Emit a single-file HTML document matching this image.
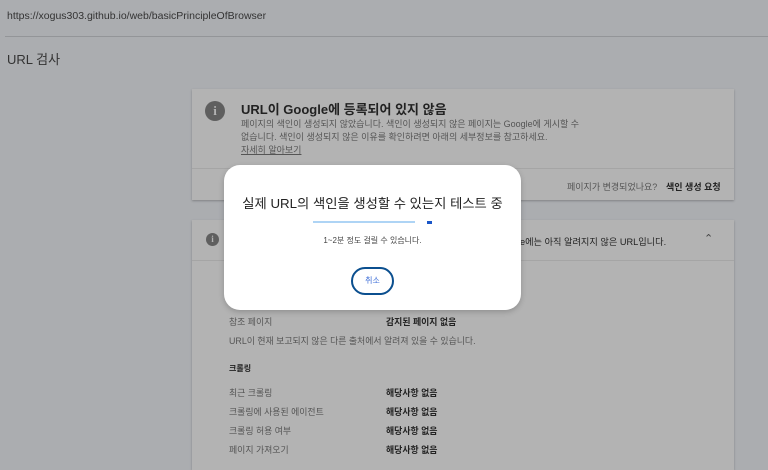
<!DOCTYPE html>
<html><head><meta charset="utf-8"><style>
*{margin:0;padding:0;box-sizing:border-box}
body{width:768px;height:463px;overflow:hidden;background:#abadb0;font-family:"Liberation Sans","Noto Sans CJK KR",sans-serif;position:relative;color:#333}
.a{position:absolute;white-space:nowrap}
.card{position:absolute;background:#b3b3b3;box-shadow:0 1px 2px rgba(0,0,0,.25)}
.ic{position:absolute;border-radius:50%;background:#5f5f5f;color:#b3b3b3;font-weight:bold;text-align:center;font-family:"Liberation Serif",serif}
.l{color:#555;font-size:8.9px}
.v{color:#222;font-size:8.9px;font-weight:bold}
</style></head><body>
<div class="a" style="left:7px;top:10px;font-size:10.5px;color:#333">https://xogus303.github.io/web/basicPrincipleOfBrowser</div>
<div class="a" style="left:5px;top:36px;width:763px;height:1px;background:#939598"></div>
<div class="a" style="left:7px;top:49px;font-size:13px;color:#333">URL 검사</div>

<div class="card" style="left:192px;top:89px;width:542px;height:111px">
 <div class="ic" style="left:13px;top:12px;width:20px;height:20px;font-size:13px;line-height:20px">i</div>
 <div class="a" style="left:49px;top:10px;font-size:13px;font-weight:bold;color:#222">URL이 Google에 등록되어 있지 않음</div>
 <div class="a" style="left:49px;top:29px;font-size:9px;color:#555;line-height:13px">페이지의 색인이 생성되지 않았습니다. 색인이 생성되지 않은 페이지는 Google에 게시할 수<br>없습니다. 색인이 생성되지 않은 이유를 확인하려면 아래의 세부정보를 참고하세요.<br><u>자세히 알아보기</u></div>
 <div class="a" style="left:0;top:79px;width:542px;height:1px;background:#a5a5a5"></div>
 <div class="a" style="left:375px;top:91px;font-size:9px;color:#555">페이지가 변경되었나요?</div>
 <div class="a" style="left:474px;top:91px;font-size:9px;color:#222;font-weight:bold">색인 생성 요청</div>
</div>

<div class="card" style="left:192px;top:220px;width:542px;height:250px">
 <div class="ic" style="left:14px;top:13px;width:13px;height:13px;font-size:9px;line-height:13px">i</div>
 <div class="a" style="left:328px;top:14px;font-size:9.2px;color:#222">e에는 아직 알려지지 않은 URL입니다.</div>
 <div class="a" style="left:512px;top:12px;font-size:11px;color:#444">&#8963;</div>
 <div class="a" style="left:0;top:40px;width:542px;height:1px;background:#a5a5a5"></div>
 <div class="a l" style="left:37px;top:95px">참조 페이지</div>
 <div class="a v" style="left:194px;top:95px">감지된 페이지 없음</div>
 <div class="a l" style="left:37px;top:114px">URL이 현재 보고되지 않은 다른 출처에서 알려져 있을 수 있습니다.</div>
 <div class="a" style="left:37px;top:143px;font-size:8px;font-weight:bold;color:#222">크롤링</div>
 <div class="a l" style="left:37px;top:166px">최근 크롤링</div><div class="a v" style="left:194px;top:166px">해당사항 없음</div>
 <div class="a l" style="left:37px;top:185px">크롤링에 사용된 에이전트</div><div class="a v" style="left:194px;top:185px">해당사항 없음</div>
 <div class="a l" style="left:37px;top:204px">크롤링 허용 여부</div><div class="a v" style="left:194px;top:204px">해당사항 없음</div>
 <div class="a l" style="left:37px;top:223px">페이지 가져오기</div><div class="a v" style="left:194px;top:223px">해당사항 없음</div>
</div>

<div class="a" style="left:224px;top:165px;width:297px;height:145px;background:#fff;border-radius:16px;box-shadow:0 2px 6px rgba(0,0,0,.2)">
 <div class="a" style="left:0;width:297px;top:28px;text-align:center;font-size:13.3px;color:#222">실제 URL의 색인을 생성할 수 있는지 테스트 중</div>
 <div class="a" style="left:89px;top:56px;width:102px;height:2px;background:#aed4f5"></div>
 <div class="a" style="left:203px;top:56px;width:5px;height:3px;background:#1a56c8"></div>
 <div class="a" style="left:0;width:297px;top:70px;text-align:center;font-size:8px;color:#444">1~2분 정도 걸릴 수 있습니다.</div>
 <div class="a" style="left:127px;top:102px;width:43px;height:28px;border:2px solid #0b4f8f;border-radius:14px;text-align:center;font-size:8px;line-height:24px;color:#3f6fd8">취소</div>
</div>
</body></html>
